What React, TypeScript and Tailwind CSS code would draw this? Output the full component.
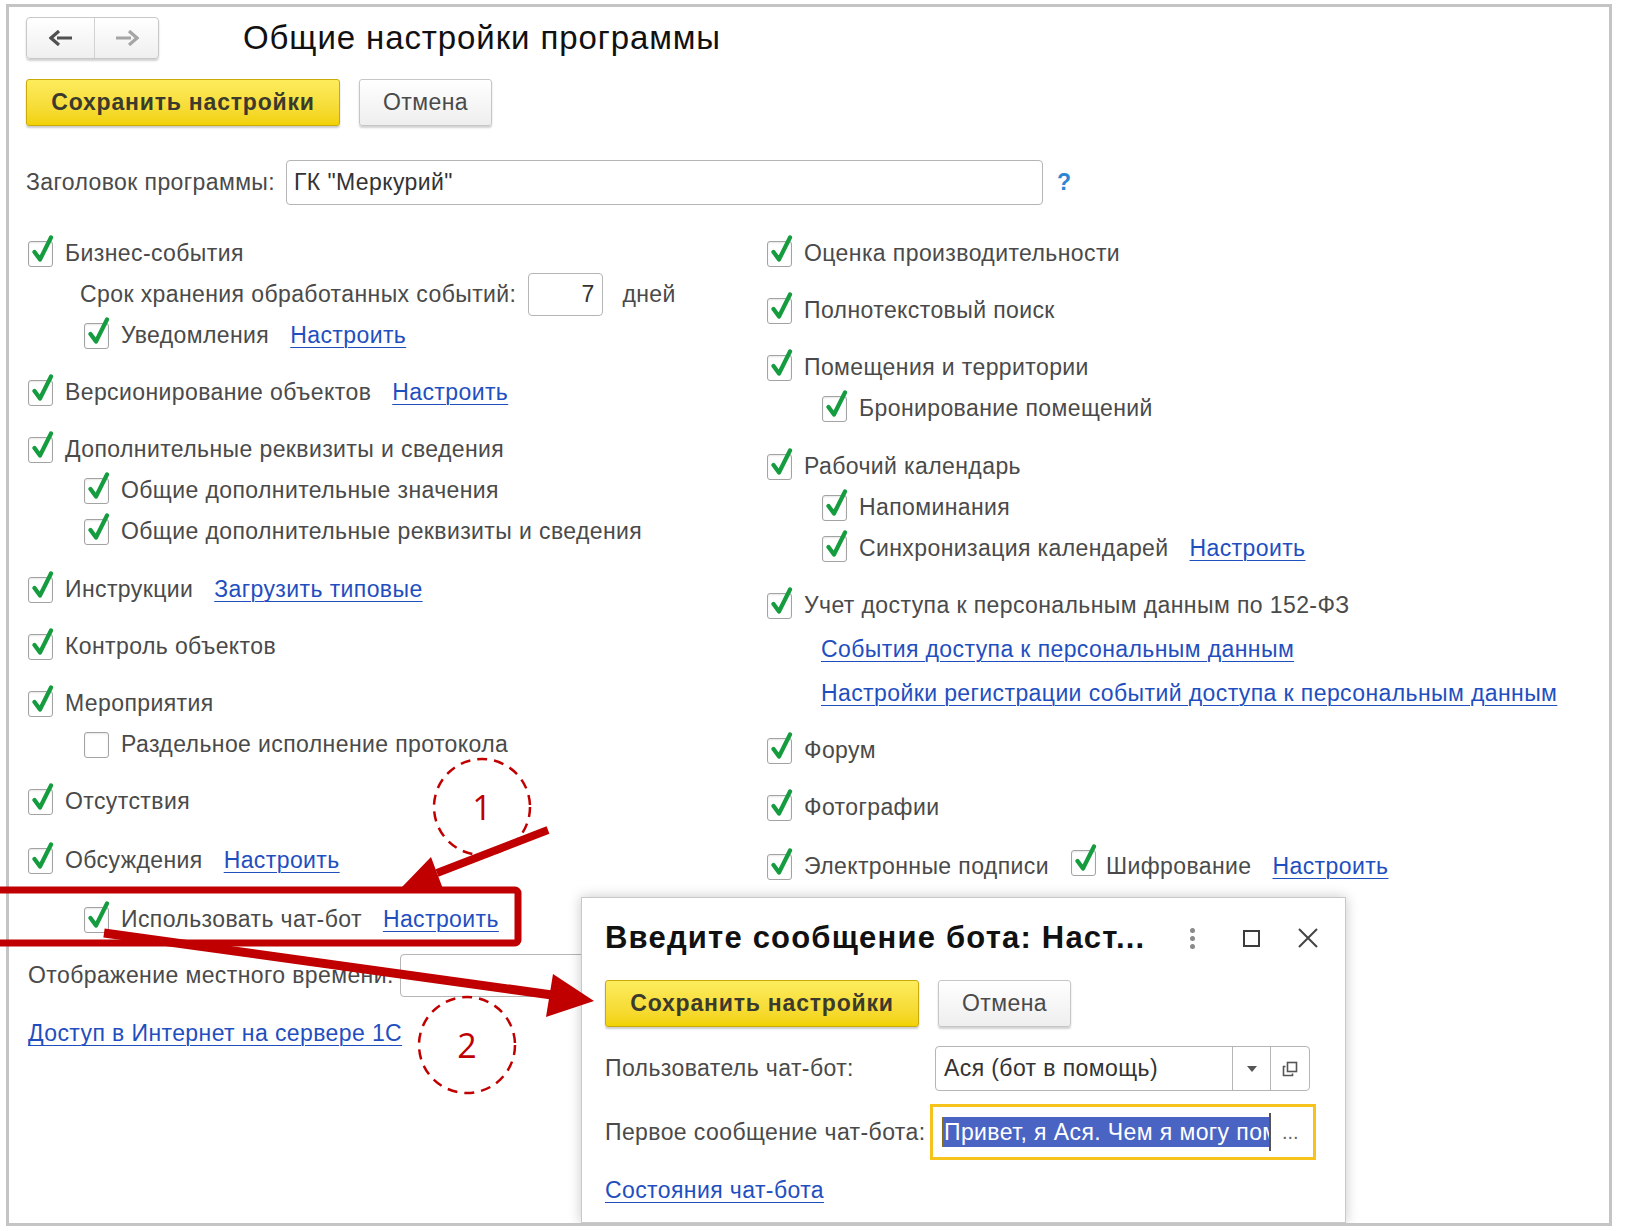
import React from 'react';

const textCls = "text-[23px] text-[#4a4a4a] tracking-[0.4px] whitespace-nowrap";
const linkCls = "text-[23px] text-[#1f4fbf] tracking-[0.4px] underline underline-offset-[4px] decoration-1 whitespace-nowrap";

function Check({ checked = true }: { checked?: boolean }) {
    return (
        <span className="relative inline-block w-[25px] h-[26px] shrink-0 rounded-[3px] border border-[#a3a3a3] bg-white shadow-[inset_0_1px_2px_rgba(0,0,0,0.1)]">
            {checked && (
                <svg className="absolute left-[1px] top-[-7px]" width="26" height="30" viewBox="0 0 26 30">
                    <path d="M4.5 17 L10 24.5 L21 2.5" fill="none" stroke="#159c3f" strokeWidth="4.2" strokeLinecap="round" strokeLinejoin="round" />
                </svg>
            )}
        </span>
    );
}

function Row({ label, link, checked = true, sub = false, right = false, h = 'h-[41px]', mt = '' }: {
    label: string; link?: string; checked?: boolean; sub?: boolean; right?: boolean; h?: string; mt?: string;
}) {
    const pad = sub ? (right ? 'pl-[55px]' : 'pl-[56px]') : '';
    return (
        <div className={`flex items-center ${h} ${mt} ${pad}`}>
            <Check checked={checked} />
            <span className={`${textCls} ml-[12px]`}>{label}</span>
            {link && <a href="#" className={`${linkCls} ml-[21px]`}>{link}</a>}
        </div>
    );
}

function YellowButton({ w }: { w: string }) {
    return (
        <button className={`${w} h-[47px] rounded-[3px] border border-[#c9aa08] bg-gradient-to-b from-[#fdec5c] to-[#f2d200] shadow-[0_2px_2px_rgba(0,0,0,0.2)] text-[23px] font-bold text-[#3b3a2c] tracking-[0.8px]`}>
            Сохранить настройки
        </button>
    );
}

function GrayButton() {
    return (
        <button className="w-[133px] h-[47px] rounded-[3px] border border-[#c6c6c6] bg-gradient-to-b from-white to-[#eeeeee] shadow-[0_2px_2px_rgba(0,0,0,0.18)] text-[23px] text-[#4a4a4a] tracking-[0.4px]">
            Отмена
        </button>
    );
}

function Dialog() {
    return (
        <div className="absolute left-[572px] top-[890px] w-[765px] bottom-0 bg-white border border-[#c9c9c9] shadow-[0_0_12px_rgba(0,0,0,0.22)] pl-[23px]">
            <div className="flex items-center h-[80px]">
                <span className="text-[31px] text-[#111] font-bold tracking-[1.2px] whitespace-nowrap">Введите сообщение бота: Наст...</span>
                <div className="ml-auto mr-[27px] flex items-center">
                    <span className="flex flex-col gap-[3px]">
                        <span className="w-[5px] h-[5px] rounded-full bg-[#8a8a8a]" />
                        <span className="w-[5px] h-[5px] rounded-full bg-[#8a8a8a]" />
                        <span className="w-[5px] h-[5px] rounded-full bg-[#8a8a8a]" />
                    </span>
                    <span className="ml-[48px] w-[17px] h-[17px] border-2 border-[#3c3c3c]" />
                    <svg className="ml-[38px]" width="20" height="20" viewBox="0 0 20 20">
                        <path d="M1 1 L19 19 M19 1 L1 19" stroke="#444" strokeWidth="2" />
                    </svg>
                </div>
            </div>
            <div className="flex items-center mt-[2px]">
                <YellowButton w="w-[314px]" />
                <div className="ml-[19px]"><GrayButton /></div>
            </div>
            <div className="flex items-center mt-[19px] h-[45px]">
                <span className={`${textCls} w-[330px]`}>Пользователь чат-бот:</span>
                <div className="flex items-center w-[375px] h-[45px] rounded-[4px] border border-[#b5b5b5] bg-white">
                    <span className="flex-1 pl-[8px] text-[23px] text-[#333] tracking-[0.4px] whitespace-nowrap">Ася (бот в помощь)</span>
                    <span className="flex items-center justify-center w-[38px] h-full border-l border-[#b5b5b5]">
                        <svg width="10" height="6" viewBox="0 0 10 6"><path d="M0 0 H10 L5 6 Z" fill="#555" /></svg>
                    </span>
                    <span className="flex items-center justify-center w-[39px] h-full border-l border-[#b5b5b5]">
                        <svg width="18" height="18" viewBox="0 0 18 18">
                            <rect x="6.5" y="2.5" width="9" height="9" fill="none" stroke="#555" strokeWidth="1.6" />
                            <path d="M4.5 6.5 H2.5 V15.5 H11.5 V13.5" fill="none" stroke="#555" strokeWidth="1.6" />
                        </svg>
                    </span>
                </div>
            </div>
            <div className="flex items-center mt-[13px] h-[56px]">
                <span className={`${textCls} w-[325px]`}>Первое сообщение чат-бота:</span>
                <div className="flex items-center w-[386px] h-[56px] border-[3px] border-[#f6c31c] bg-white pl-[9px]">
                    <span className="w-[327px] h-[30px] overflow-hidden bg-[#4a64c4] border-l-2 border-[#8a6d1a]">
                        <span className="block text-[23px] leading-[30px] text-white tracking-[0.4px] whitespace-nowrap">Привет, я Ася. Чем я могу помочь?</span>
                    </span>
                    <span className="w-[2px] h-[38px] bg-[#555]" />
                    <span className="ml-[11px] text-[20px] text-[#666] leading-none">...</span>
                </div>
            </div>
            <div className="mt-[12px] h-[36px] flex items-center">
                <a href="#" className={linkCls}>Состояния чат-бота</a>
            </div>
        </div>
    );
}

function Annotations() {
    return (
        <svg className="absolute left-0 top-0 pointer-events-none" width="1631" height="1231" viewBox="0 0 1631 1231">
            <rect x="-12" y="890" width="530" height="53" rx="3" fill="none" stroke="#c00000" strokeWidth="7" />
            <line x1="548" y1="830" x2="437" y2="873" stroke="#c00000" strokeWidth="8" />
            <polygon points="402,887 443,889 431,857" fill="#c00000" />
            <line x1="104" y1="933" x2="552" y2="995" stroke="#c00000" strokeWidth="9" />
            <polygon points="594,1001 546,1017 553,974" fill="#c00000" />
            <circle cx="482" cy="807" r="48" fill="none" stroke="#c00000" strokeWidth="2.5" strokeDasharray="10 7" />
            <text x="482" y="820" textAnchor="middle" fontSize="34" fill="#c00000" fontFamily="'Open Sans', 'Liberation Sans', sans-serif">1</text>
            <circle cx="467" cy="1045" r="48" fill="none" stroke="#c00000" strokeWidth="2.5" strokeDasharray="10 7" />
            <text x="467" y="1058" textAnchor="middle" fontSize="34" fill="#c00000" fontFamily="'Open Sans', 'Liberation Sans', sans-serif">2</text>
        </svg>
    );
}

export default function App() {
    return (
        <div className="relative w-[1631px] h-[1231px] bg-white overflow-hidden font-['Liberation_Sans',Arial,sans-serif]">
            <div className="relative ml-[6px] mt-[4px] w-[1606px] h-[1222px] border-[3px] border-[#c4c4c4] overflow-hidden pl-[17px]">
                {/* Header */}
                <div className="flex items-center mt-[10px] h-[42px]">
                    <div className="flex w-[133px] h-[42px] rounded-[4px] border border-[#c8c8c8] bg-gradient-to-b from-white to-[#efefef] shadow-[0_2px_2px_rgba(0,0,0,0.18)]">
                        <span className="flex items-center justify-center w-[68px] border-r border-[#d2d2d2]">
                            <svg width="24" height="16" viewBox="0 0 24 16"><path d="M23 8 H8 M10 1 L2 8 L10 15" fill="none" stroke="#505050" strokeWidth="3.2" /></svg>
                        </span>
                        <span className="flex items-center justify-center flex-1">
                            <svg width="24" height="16" viewBox="0 0 24 16"><path d="M1 8 H16 M14 1 L22 8 L14 15" fill="none" stroke="#a5a5a5" strokeWidth="3.2" /></svg>
                        </span>
                    </div>
                    <h1 className="ml-[84px] text-[33px] text-[#111] tracking-[0.9px] whitespace-nowrap">Общие настройки программы</h1>
                </div>

                {/* Buttons */}
                <div className="flex items-center mt-[20px]">
                    <YellowButton w="w-[314px]" />
                    <div className="ml-[19px]"><GrayButton /></div>
                </div>

                {/* Title field */}
                <div className="flex items-center mt-[34px] h-[45px]">
                    <span className={`${textCls} w-[260px]`}>Заголовок программы:</span>
                    <div className="w-[757px] h-[45px] rounded-[4px] border border-[#b5b5b5] flex items-center pl-[7px]">
                        <span className="text-[23px] text-[#333] tracking-[0.4px]">ГК "Меркурий"</span>
                    </div>
                    <span className="ml-[14px] text-[23px] font-bold text-[#2c86d4]">?</span>
                </div>

                {/* Columns */}
                <div className="flex mt-[28px] ml-[2px]">
                    <div className="w-[739px] flex flex-col">
                        <Row label="Бизнес-события" />
                        <div className="flex items-center h-[41px] pl-[52px]">
                            <span className={textCls}>Срок хранения обработанных событий:</span>
                            <div className="ml-[12px] w-[75px] h-[43px] rounded-[4px] border border-[#b5b5b5] flex items-center justify-end pr-[8px]">
                                <span className="text-[23px] text-[#333]">7</span>
                            </div>
                            <span className={`${textCls} ml-[19px]`}>дней</span>
                        </div>
                        <Row label="Уведомления" link="Настроить" sub />
                        <Row label="Версионирование объектов" link="Настроить" mt="mt-[16px]" />
                        <Row label="Дополнительные реквизиты и сведения" mt="mt-[16px]" />
                        <Row label="Общие дополнительные значения" sub />
                        <Row label="Общие дополнительные реквизиты и сведения" sub />
                        <Row label="Инструкции" link="Загрузить типовые" mt="mt-[17px]" />
                        <Row label="Контроль объектов" mt="mt-[16px]" />
                        <Row label="Мероприятия" mt="mt-[16px]" />
                        <Row label="Раздельное исполнение протокола" checked={false} sub />
                        <Row label="Отсутствия" mt="mt-[16px]" />
                        <Row label="Обсуждения" link="Настроить" mt="mt-[18px]" />
                        <Row label="Использовать чат-бот" link="Настроить" sub mt="mt-[18px]" />
                        <div className="flex items-center h-[43px] mt-[14px]">
                            <span className={`${textCls} w-[372px]`}>Отображение местного времени:</span>
                            <div className="w-[300px] h-[43px] rounded-[4px] border border-[#b5b5b5]" />
                        </div>
                        <div className="flex items-center h-[41px] mt-[16px]">
                            <a href="#" className={linkCls}>Доступ в Интернет на сервере 1С</a>
                        </div>
                    </div>

                    <div className="flex flex-col">
                        <Row label="Оценка производительности" />
                        <Row label="Полнотекстовый поиск" mt="mt-[16px]" />
                        <Row label="Помещения и территории" mt="mt-[16px]" />
                        <Row label="Бронирование помещений" sub right />
                        <Row label="Рабочий календарь" mt="mt-[17px]" />
                        <Row label="Напоминания" sub right />
                        <Row label="Синхронизация календарей" link="Настроить" sub right />
                        <Row label="Учет доступа к персональным данным по 152-ФЗ" mt="mt-[16px]" />
                        <div className="flex items-center h-[46px] pl-[54px]">
                            <a href="#" className={linkCls}>События доступа к персональным данным</a>
                        </div>
                        <div className="flex items-center h-[42px] pl-[54px]">
                            <a href="#" className={linkCls}>Настройки регистрации событий доступа к персональным данным</a>
                        </div>
                        <Row label="Форум" mt="mt-[16px]" />
                        <Row label="Фотографии" mt="mt-[16px]" />
                        <div className="flex items-center h-[41px] mt-[18px]">
                            <Check />
                            <span className={`${textCls} ml-[12px]`}>Электронные подписи</span>
                            <span className="ml-[22px]"><Check /></span>
                            <span className={`${textCls} ml-[10px]`}>Шифрование</span>
                            <a href="#" className={`${linkCls} ml-[21px]`}>Настроить</a>
                        </div>
                    </div>
                </div>

                <Dialog />
            </div>
            <Annotations />
        </div>
    );
}
